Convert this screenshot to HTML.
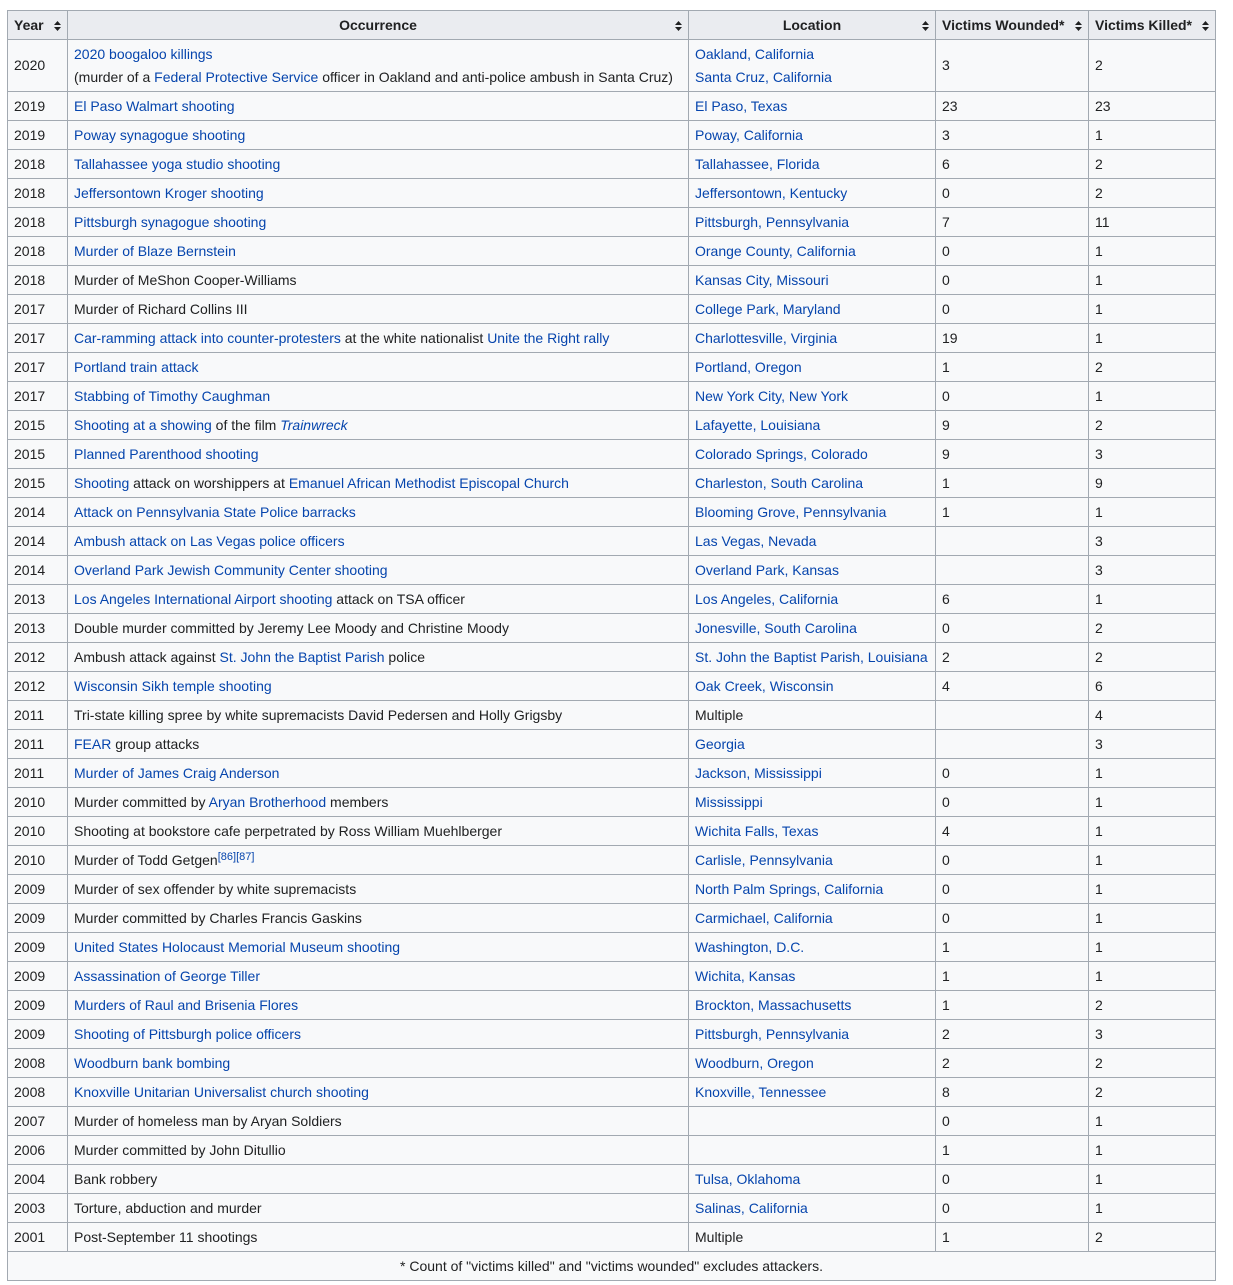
<!DOCTYPE html>
<html><head><meta charset="utf-8"><style>
body{margin:0;background:#fff;font-family:"Liberation Sans",Arial,sans-serif;font-size:14px;color:#202122}
table{position:absolute;left:7px;top:10px;border-collapse:collapse;table-layout:fixed;background:#f8f9fa;width:1208px}
td,th{border:1px solid #a2a9b1;padding:0 6px;height:28px;line-height:18px;white-space:nowrap;overflow:hidden;vertical-align:middle;text-align:left}
th{background:#eaecf0;font-weight:bold;position:relative}
th.c{text-align:center}
th .s{position:absolute;right:6px;top:10px;width:7px;height:10px}
th.y{padding-right:16px}
a{color:#0645ad;text-decoration:none}
sup{font-size:11px;line-height:0;vertical-align:5px}
tr.tall td{height:51px;line-height:23px}
td.f{text-align:center}
</style></head><body>
<table>
<colgroup><col style="width:60px"><col style="width:621px"><col style="width:247px"><col style="width:153px"><col style="width:127px"></colgroup>
<tr><th class="y">Year<svg class="s" viewBox="0 0 7 10"><path d="M0 4L3.5 0L7 4Z M0 6L3.5 10L7 6Z" fill="#202122"/></svg></th>
<th class="c">Occurrence<svg class="s" viewBox="0 0 7 10"><path d="M0 4L3.5 0L7 4Z M0 6L3.5 10L7 6Z" fill="#202122"/></svg></th>
<th class="c">Location<svg class="s" viewBox="0 0 7 10"><path d="M0 4L3.5 0L7 4Z M0 6L3.5 10L7 6Z" fill="#202122"/></svg></th>
<th>Victims Wounded*<svg class="s" viewBox="0 0 7 10"><path d="M0 4L3.5 0L7 4Z M0 6L3.5 10L7 6Z" fill="#202122"/></svg></th>
<th>Victims Killed*<svg class="s" viewBox="0 0 7 10"><path d="M0 4L3.5 0L7 4Z M0 6L3.5 10L7 6Z" fill="#202122"/></svg></th></tr>
<tr class="tall"><td>2020</td><td><a>2020 boogaloo killings</a><br>(murder of a <a>Federal Protective Service</a> officer in Oakland and anti-police ambush in Santa Cruz)</td><td><a>Oakland, California</a><br><a>Santa Cruz, California</a></td><td>3</td><td>2</td></tr>
<tr><td>2019</td><td><a>El Paso Walmart shooting</a></td><td><a>El Paso, Texas</a></td><td>23</td><td>23</td></tr>
<tr><td>2019</td><td><a>Poway synagogue shooting</a></td><td><a>Poway, California</a></td><td>3</td><td>1</td></tr>
<tr><td>2018</td><td><a>Tallahassee yoga studio shooting</a></td><td><a>Tallahassee, Florida</a></td><td>6</td><td>2</td></tr>
<tr><td>2018</td><td><a>Jeffersontown Kroger shooting</a></td><td><a>Jeffersontown, Kentucky</a></td><td>0</td><td>2</td></tr>
<tr><td>2018</td><td><a>Pittsburgh synagogue shooting</a></td><td><a>Pittsburgh, Pennsylvania</a></td><td>7</td><td>11</td></tr>
<tr><td>2018</td><td><a>Murder of Blaze Bernstein</a></td><td><a>Orange County, California</a></td><td>0</td><td>1</td></tr>
<tr><td>2018</td><td>Murder of MeShon Cooper-Williams</td><td><a>Kansas City, Missouri</a></td><td>0</td><td>1</td></tr>
<tr><td>2017</td><td>Murder of Richard Collins III</td><td><a>College Park, Maryland</a></td><td>0</td><td>1</td></tr>
<tr><td>2017</td><td><a>Car-ramming attack into counter-protesters</a> at the white nationalist <a>Unite the Right rally</a></td><td><a>Charlottesville, Virginia</a></td><td>19</td><td>1</td></tr>
<tr><td>2017</td><td><a>Portland train attack</a></td><td><a>Portland, Oregon</a></td><td>1</td><td>2</td></tr>
<tr><td>2017</td><td><a>Stabbing of Timothy Caughman</a></td><td><a>New York City, New York</a></td><td>0</td><td>1</td></tr>
<tr><td>2015</td><td><a>Shooting at a showing</a> of the film <a><i>Trainwreck</i></a></td><td><a>Lafayette, Louisiana</a></td><td>9</td><td>2</td></tr>
<tr><td>2015</td><td><a>Planned Parenthood shooting</a></td><td><a>Colorado Springs, Colorado</a></td><td>9</td><td>3</td></tr>
<tr><td>2015</td><td><a>Shooting</a> attack on worshippers at <a>Emanuel African Methodist Episcopal Church</a></td><td><a>Charleston, South Carolina</a></td><td>1</td><td>9</td></tr>
<tr><td>2014</td><td><a>Attack on Pennsylvania State Police barracks</a></td><td><a>Blooming Grove, Pennsylvania</a></td><td>1</td><td>1</td></tr>
<tr><td>2014</td><td><a>Ambush attack on Las Vegas police officers</a></td><td><a>Las Vegas, Nevada</a></td><td></td><td>3</td></tr>
<tr><td>2014</td><td><a>Overland Park Jewish Community Center shooting</a></td><td><a>Overland Park, Kansas</a></td><td></td><td>3</td></tr>
<tr><td>2013</td><td><a>Los Angeles International Airport shooting</a> attack on TSA officer</td><td><a>Los Angeles, California</a></td><td>6</td><td>1</td></tr>
<tr><td>2013</td><td>Double murder committed by Jeremy Lee Moody and Christine Moody</td><td><a>Jonesville, South Carolina</a></td><td>0</td><td>2</td></tr>
<tr><td>2012</td><td>Ambush attack against <a>St. John the Baptist Parish</a> police</td><td style="padding-right:2px"><a>St. John the Baptist Parish, Louisiana</a></td><td>2</td><td>2</td></tr>
<tr><td>2012</td><td><a>Wisconsin Sikh temple shooting</a></td><td><a>Oak Creek, Wisconsin</a></td><td>4</td><td>6</td></tr>
<tr><td>2011</td><td>Tri-state killing spree by white supremacists David Pedersen and Holly Grigsby</td><td>Multiple</td><td></td><td>4</td></tr>
<tr><td>2011</td><td><a>FEAR</a> group attacks</td><td><a>Georgia</a></td><td></td><td>3</td></tr>
<tr><td>2011</td><td><a>Murder of James Craig Anderson</a></td><td><a>Jackson, Mississippi</a></td><td>0</td><td>1</td></tr>
<tr><td>2010</td><td>Murder committed by <a>Aryan Brotherhood</a> members</td><td><a>Mississippi</a></td><td>0</td><td>1</td></tr>
<tr><td>2010</td><td>Shooting at bookstore cafe perpetrated by Ross William Muehlberger</td><td><a>Wichita Falls, Texas</a></td><td>4</td><td>1</td></tr>
<tr><td>2010</td><td>Murder of Todd Getgen<sup><a>[86]</a><a>[87]</a></sup></td><td><a>Carlisle, Pennsylvania</a></td><td>0</td><td>1</td></tr>
<tr><td>2009</td><td>Murder of sex offender by white supremacists</td><td><a>North Palm Springs, California</a></td><td>0</td><td>1</td></tr>
<tr><td>2009</td><td>Murder committed by Charles Francis Gaskins</td><td><a>Carmichael, California</a></td><td>0</td><td>1</td></tr>
<tr><td>2009</td><td><a>United States Holocaust Memorial Museum shooting</a></td><td><a>Washington, D.C.</a></td><td>1</td><td>1</td></tr>
<tr><td>2009</td><td><a>Assassination of George Tiller</a></td><td><a>Wichita, Kansas</a></td><td>1</td><td>1</td></tr>
<tr><td>2009</td><td><a>Murders of Raul and Brisenia Flores</a></td><td><a>Brockton, Massachusetts</a></td><td>1</td><td>2</td></tr>
<tr><td>2009</td><td><a>Shooting of Pittsburgh police officers</a></td><td><a>Pittsburgh, Pennsylvania</a></td><td>2</td><td>3</td></tr>
<tr><td>2008</td><td><a>Woodburn bank bombing</a></td><td><a>Woodburn, Oregon</a></td><td>2</td><td>2</td></tr>
<tr><td>2008</td><td><a>Knoxville Unitarian Universalist church shooting</a></td><td><a>Knoxville, Tennessee</a></td><td>8</td><td>2</td></tr>
<tr><td>2007</td><td>Murder of homeless man by Aryan Soldiers</td><td></td><td>0</td><td>1</td></tr>
<tr><td>2006</td><td>Murder committed by John Ditullio</td><td></td><td>1</td><td>1</td></tr>
<tr><td>2004</td><td>Bank robbery</td><td><a>Tulsa, Oklahoma</a></td><td>0</td><td>1</td></tr>
<tr><td>2003</td><td>Torture, abduction and murder</td><td><a>Salinas, California</a></td><td>0</td><td>1</td></tr>
<tr><td>2001</td><td>Post-September 11 shootings</td><td>Multiple</td><td>1</td><td>2</td></tr>
<tr><td colspan="5" class="f">* Count of "victims killed" and "victims wounded" excludes attackers.</td></tr>
</table>
</body></html>
